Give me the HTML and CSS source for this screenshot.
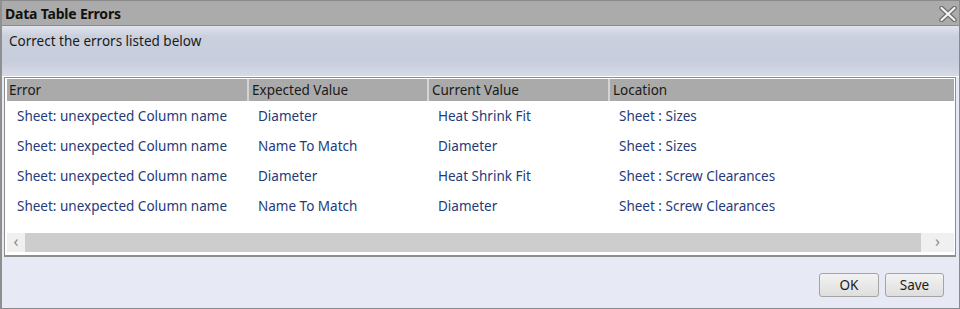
FILE: index.html
```html
<!DOCTYPE html>
<html>
<head>
<meta charset="UTF-8">
<title>Data Table Errors</title>
<link rel="stylesheet" href="styles.css">
</head>
<body>
<div class="dialog">
    <div class="titlebar">
        <span class="caption">Data Table Errors</span>
        <svg class="close" width="18" height="16" viewBox="0 0 18 16">
            <path d="M2.5 2 L15.5 14 M15.5 2 L2.5 14" stroke="#6d6d6d" stroke-width="4.5" stroke-linecap="round"/>
            <path d="M2.5 2 L15.5 14 M15.5 2 L2.5 14" stroke="#f4f4f4" stroke-width="2.2" stroke-linecap="round"/>
        </svg>
    </div>
    <div class="intro">Correct the errors listed below</div>
    <div class="panel">
        <table class="errors">
            <thead>
                <tr><th class="c1">Error</th><th class="c2">Expected Value</th><th class="c3">Current Value</th><th class="c4">Location</th></tr>
            </thead>
            <tbody>
                <tr><td>Sheet: unexpected Column name</td><td>Diameter</td><td>Heat Shrink Fit</td><td>Sheet : Sizes</td></tr>
                <tr><td>Sheet: unexpected Column name</td><td>Name To Match</td><td>Diameter</td><td>Sheet : Sizes</td></tr>
                <tr><td>Sheet: unexpected Column name</td><td>Diameter</td><td>Heat Shrink Fit</td><td>Sheet : Screw Clearances</td></tr>
                <tr><td>Sheet: unexpected Column name</td><td>Name To Match</td><td>Diameter</td><td>Sheet : Screw Clearances</td></tr>
            </tbody>
        </table>
        <div class="hscroll">
            <span class="arrow left">&lsaquo;</span>
            <span class="thumb"></span>
            <span class="arrow right">&rsaquo;</span>
        </div>
    </div>
    <div class="footer">
        <button class="btn ok">OK</button>
        <button class="btn">Save</button>
    </div>
</div>
</body>
</html>
```

FILE: styles.css
```css
body { margin: 0; font-family: "Noto Sans", "Open Sans", sans-serif; background: #e7e9f4; }
.dialog { height: 309px; box-sizing: border-box; border: 1px solid #8a8a8a; border-left: 2px solid #8f8f8f; display: flex; flex-direction: column; background: #e7e9f4; }
.titlebar { height: 24px; background: #ababab; border-bottom: 1px solid #8c8c8c; display: flex; align-items: center; justify-content: space-between; padding: 0 2px 0 3px; }
.caption { font-weight: bold; font-size: 14px; color: #111; letter-spacing: -0.2px; }
.close { margin-top: 1px; }
.intro { height: 51px; padding: 6px 0 0 7px; box-sizing: border-box; font-size: 13.5px; color: #1a1a1a;
    background: linear-gradient(#e1e4ee 0%, #cbd0de 20%, #c7cddc 70%, #d6dae6 100%);
    border-bottom: 1px solid #ffffff; }
.panel { margin: 0 3px 0 2px; background: #fff; border: 1px solid #8d8d8d; border-bottom: 2px solid #8d8d8d; padding: 1px 1px 2px 2px; height: 174px; display: flex; flex-direction: column; justify-content: space-between; }
.errors { border-collapse: collapse; width: 100%; table-layout: fixed; font-size: 13.5px; }
.errors th { background: #aaaaaa; color: #1a1a1a; font-weight: normal; text-align: left; height: 22px; padding: 0 0 0 3px; border-left: 2px solid #d4d4d4; }
.errors th.c1 { width: 238px; border-left: none; padding-left: 2px; }
.errors th.c2 { width: 175px; }
.errors th.c3 { width: 176px; }
.errors td { color: #253a7a; height: 30px; padding: 0 0 0 10px; white-space: nowrap; }
.hscroll { display: flex; height: 19px; background: #f0f0f0; margin-bottom: 1px; }
.arrow { width: 18px; color: #8a8a8a; font-size: 16px; line-height: 17px; text-align: center; }
.arrow.right { width: 33px; }
.thumb { flex: 1; background: #cdcdcd; }
.footer { flex: 1; display: flex; justify-content: flex-end; align-items: flex-start; gap: 6px; padding: 16px 15px 0 0; }
.btn { width: 60px; height: 24px; font-family: inherit; font-size: 13.5px; color: #1a1a1a; border: 1px solid #a4a4a4; border-radius: 3px; background: linear-gradient(#f3f3f3, #dedede); padding: 0; }
.btn + .btn { width: 59px; }
```
